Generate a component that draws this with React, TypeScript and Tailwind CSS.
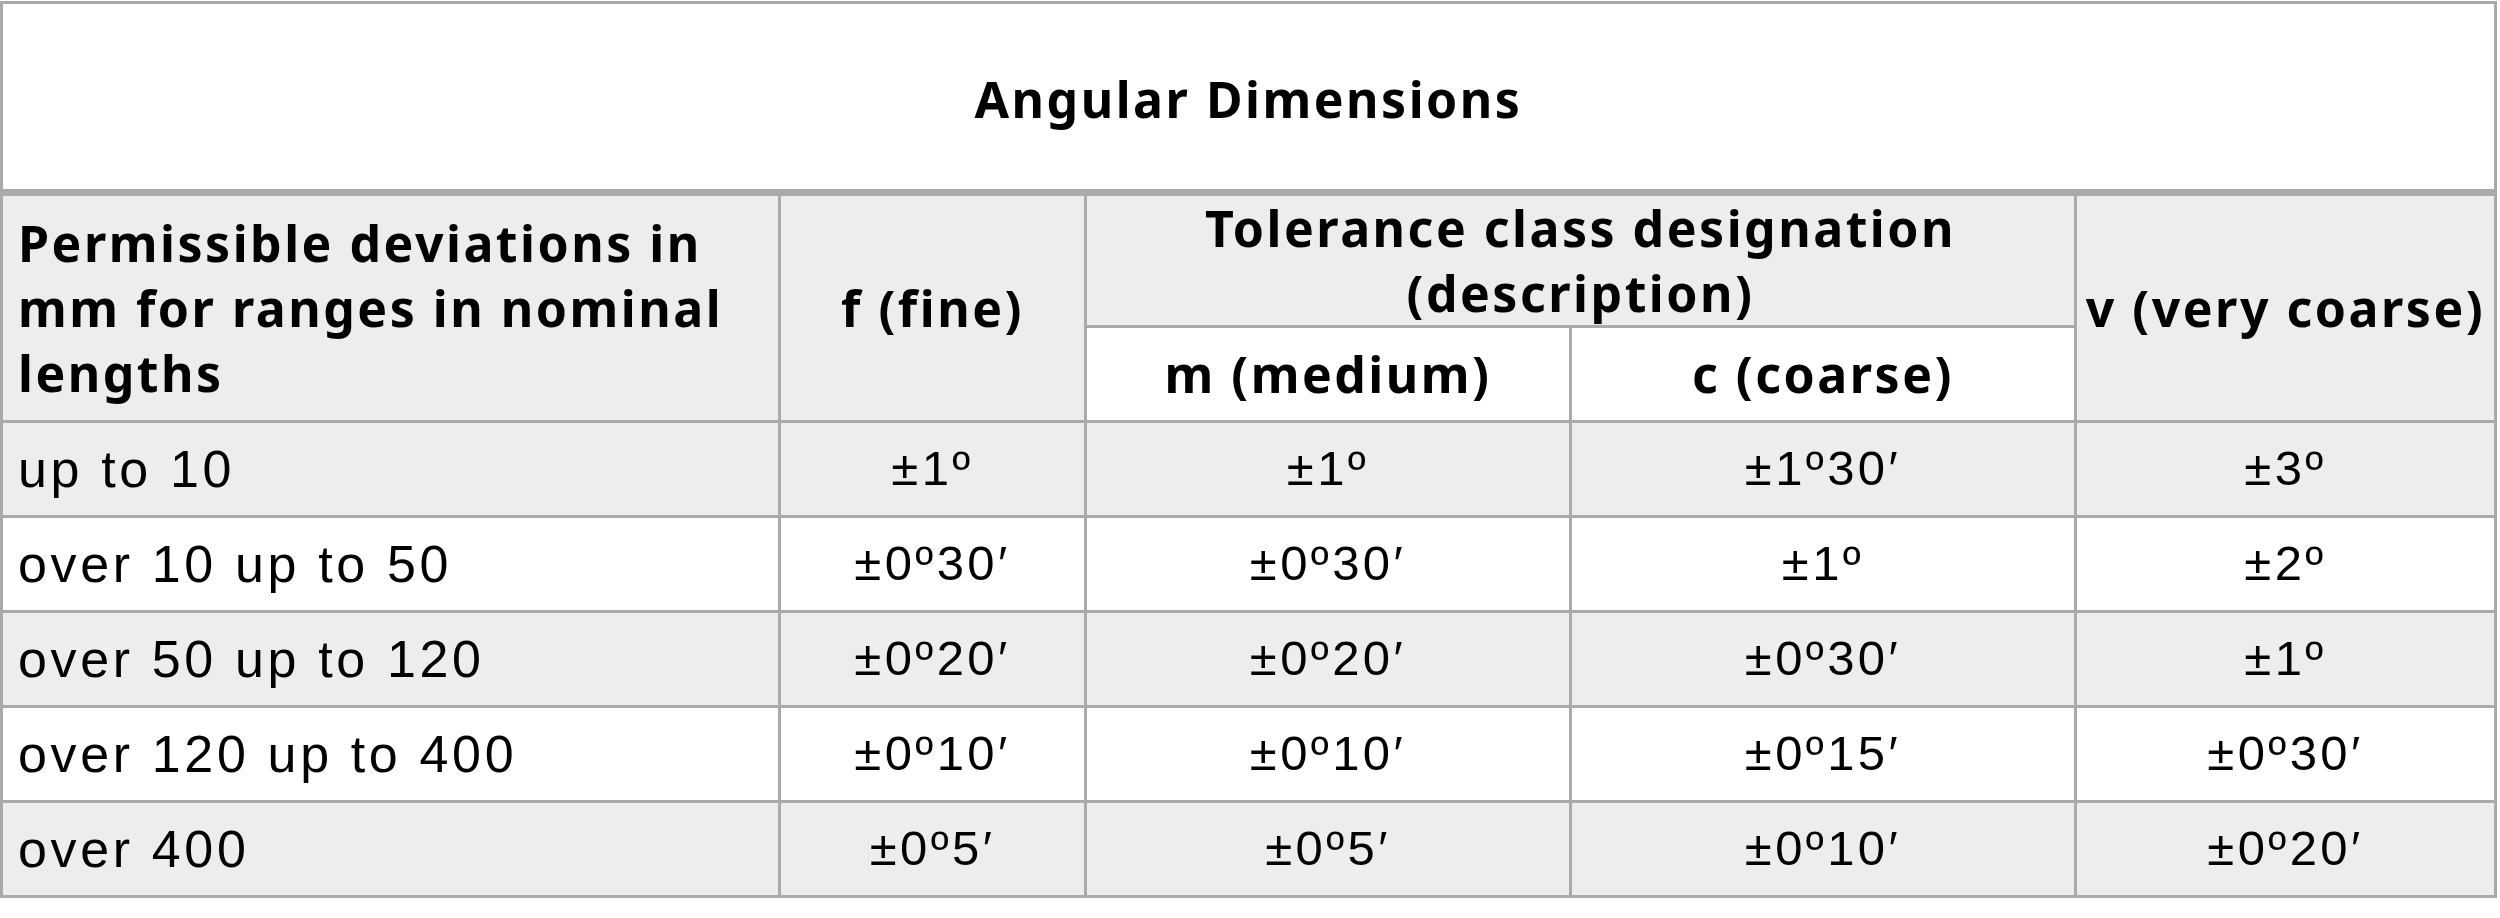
const rows = [
  { range: "up to 10", f: "±1º", m: "±1º", c: "±1º30′", v: "±3º" },
  { range: "over 10 up to 50", f: "±0º30′", m: "±0º30′", c: "±1º", v: "±2º" },
  { range: "over 50 up to 120", f: "±0º20′", m: "±0º20′", c: "±0º30′", v: "±1º" },
  { range: "over 120 up to 400", f: "±0º10′", m: "±0º10′", c: "±0º15′", v: "±0º30′" },
  { range: "over 400", f: "±0º5′", m: "±0º5′", c: "±0º10′", v: "±0º20′" },
];

const head = "font-['Noto_Sans',sans-serif] font-bold text-[50px] leading-[65px] tracking-[0.05em] text-black";
const body = "font-['Liberation_Sans',Arial,sans-serif] text-black";

export default function App() {
  return (
    <div className="min-h-screen bg-white pt-px">
      <div className="grid w-[2497px] grid-cols-[778px_306px_485px_505px_420px] border-l-[3px] border-t-[3px] border-[#aaaaaa]">
        {/* title */}
        <div className={`col-span-5 flex h-[192px] items-center justify-center border-r-[3px] border-b-[7px] border-[#aaaaaa] bg-white pt-[6px] ${head}`}>
          Angular Dimensions
        </div>

        {/* header */}
        <div className={`row-span-2 flex items-center border-r-[3px] border-b-[3px] border-[#aaaaaa] bg-[#ededed] pl-[15px] ${head}`}>
          <span>
            Permissible deviations in
            <br />
            mm for ranges in nominal
            <br />
            lengths
          </span>
        </div>
        <div className={`row-span-2 flex items-center justify-center border-r-[3px] border-b-[3px] border-[#aaaaaa] bg-[#ededed] ${head}`}>
          f (fine)
        </div>
        <div className={`col-span-2 flex h-[132px] items-center justify-center border-r-[3px] border-b-[3px] border-[#aaaaaa] bg-[#ededed] text-center ${head}`}>
          <span>
            Tolerance class designation
            <br />
            (description)
          </span>
        </div>
        <div className={`row-span-2 flex items-center justify-center whitespace-nowrap border-r-[3px] border-b-[3px] border-[#aaaaaa] bg-[#ededed] ${head}`}>
          v (very coarse)
        </div>
        <div className={`flex h-[95px] items-center justify-center border-r-[3px] border-b-[3px] border-[#aaaaaa] bg-white ${head}`}>
          m (medium)
        </div>
        <div className={`flex h-[95px] items-center justify-center border-r-[3px] border-b-[3px] border-[#aaaaaa] bg-white ${head}`}>
          c (coarse)
        </div>

        {/* data */}
        {rows.map((r, i) => {
          const bg = i % 2 === 0 ? "bg-[#ededed]" : "bg-white";
          const cell = `flex h-[95px] items-center justify-center border-r-[3px] border-b-[3px] border-[#aaaaaa] ${bg} ${body} text-[49px] tracking-[0.07em]`;
          return [
            <div
              key={`${i}-r`}
              className={`flex h-[95px] items-center border-r-[3px] border-b-[3px] border-[#aaaaaa] pl-[15px] ${bg} ${body} text-[52px] tracking-[0.07em]`}
            >
              {r.range}
            </div>,
            <div key={`${i}-f`} className={cell}>{r.f}</div>,
            <div key={`${i}-m`} className={cell}>{r.m}</div>,
            <div key={`${i}-c`} className={cell}>{r.c}</div>,
            <div key={`${i}-v`} className={cell}>{r.v}</div>,
          ];
        })}
      </div>
    </div>
  );
}
